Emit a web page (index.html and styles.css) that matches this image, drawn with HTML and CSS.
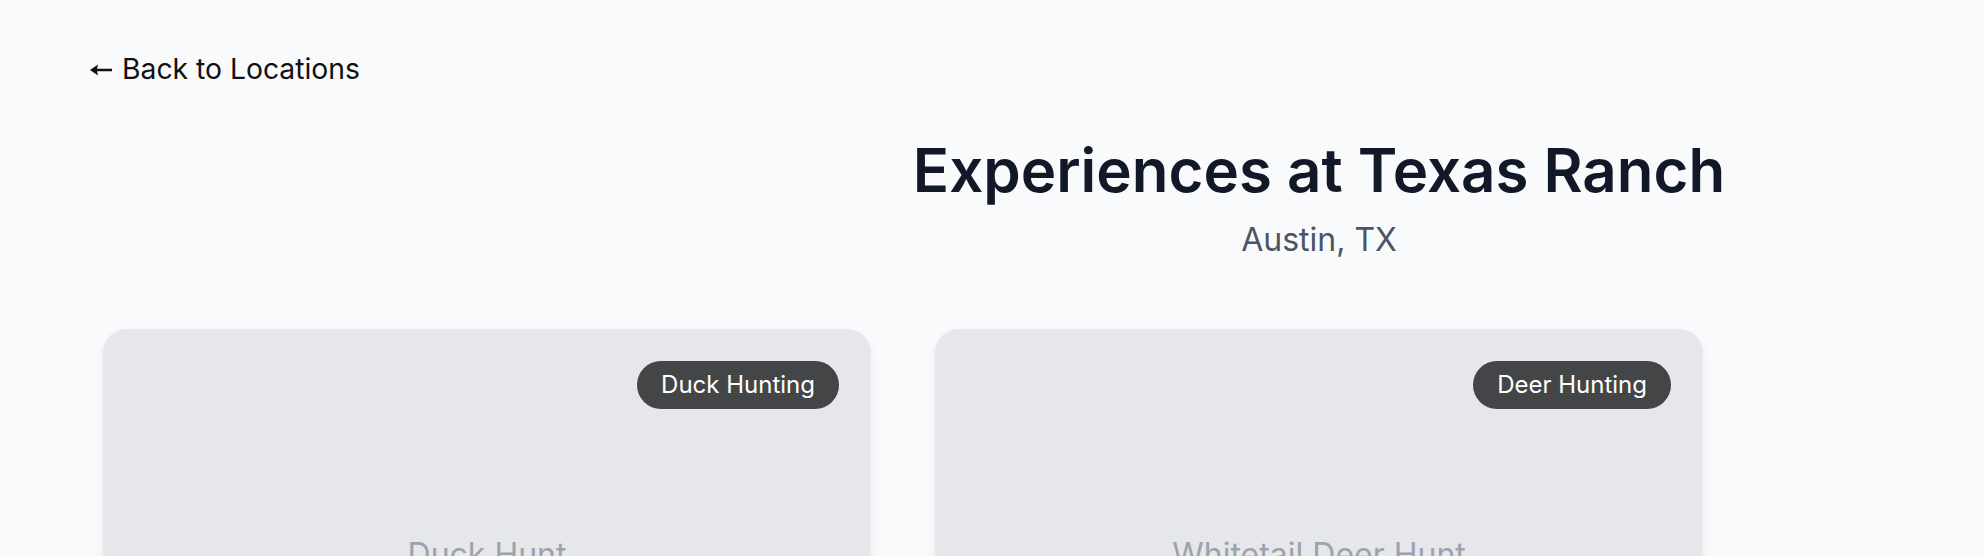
FILE: index.html
```html
<!DOCTYPE html>
<html lang="en">
<head>
<meta charset="utf-8">
<title>Experiences at Texas Ranch</title>
<link rel="stylesheet" href="styles.css">
</head>
<body>
<div class="page">
  <a class="back" href="#"><svg class="arrow" width="22" height="12" viewBox="0 0 22 12" aria-hidden="true"><path d="M0 6 L8 0.5 L7 4.7 L22 4.7 L22 7.3 L7 7.3 L8 11.5 Z" fill="#111111"/></svg><span>Back to Locations</span></a>
  <div class="content">
    <header class="header">
      <h1 class="title">Experiences at Texas Ranch</h1>
      <p class="subtitle">Austin, TX</p>
    </header>
    <div class="grid">
      <div class="card">
        <div class="card-image">
          <span class="placeholder">Duck Hunt</span>
          <span class="badge">Duck Hunting</span>
        </div>
      </div>
      <div class="card">
        <div class="card-image">
          <span class="placeholder">Whitetail Deer Hunt</span>
          <span class="badge">Deer Hunting</span>
        </div>
      </div>
    </div>
  </div>
</div>
</body>
</html>
```
FILE: styles.css
```css
* { box-sizing: border-box; }
html, body { margin: 0; padding: 0; }
body {
  background: #f9fafb;
  font-family: Inter, "Noto Sans", sans-serif;
  color: #111827;
  overflow: hidden;
}
.page {
  padding: 51px 0 0 90px;
}
.back {
  display: inline-flex;
  align-items: center;
  gap: 10px;
  font-size: 28.3px;
  line-height: 36px;
  color: #111111;
  text-decoration: none;
}
.arrow {
  display: block;
  flex: none;
  margin-top: 1px;
}
.content {
  width: max-content;
  margin-top: 47px;
}
.header {
  text-align: center;
}
.title {
  margin: 0;
  font-size: 60px;
  line-height: 72px;
  font-weight: 600;
  color: #111827;
}
.subtitle {
  margin: 14px 0 0;
  font-size: 32px;
  line-height: 40px;
  color: #4b5563;
}
.grid {
  display: grid;
  grid-template-columns: repeat(3, 768px);
  gap: 64px;
  padding: 0 13px;
  margin-top: 69px;
}
.card {
  background: #e5e7eb;
  border-radius: 24px;
  box-shadow: 0 4px 10px rgba(0, 0, 0, 0.06);
  overflow: hidden;
}
.card-image {
  position: relative;
  height: 452px;
  display: flex;
  align-items: center;
  justify-content: center;
}
.placeholder {
  font-size: 32px;
  line-height: 40px;
  color: #9ca3af;
}
.badge {
  position: absolute;
  top: 32px;
  right: 32px;
  background: rgba(0, 0, 0, 0.7);
  color: #ffffff;
  font-size: 24px;
  line-height: 32px;
  padding: 8px 24px;
  border-radius: 9999px;
}
```
